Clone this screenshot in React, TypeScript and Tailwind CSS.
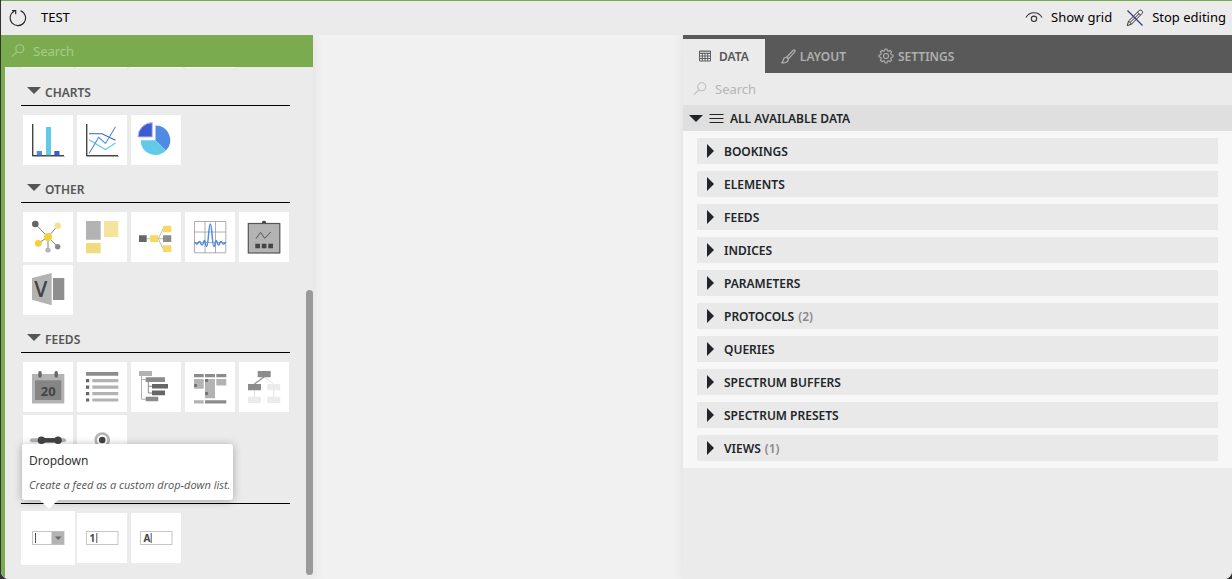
import React from 'react';

const SearchIcon = ({ className }: { className: string }) => (
  <svg viewBox="0 0 14 14" className={className} fill="none" stroke="currentColor" strokeWidth="1.1">
    <circle cx="8.8" cy="4.8" r="4" />
    <path d="M6 7.7 1 12.7" />
  </svg>
);

const DownTriangle = () => (
  <svg viewBox="0 0 14 7" className="h-[7px] w-3.5 shrink-0" fill="currentColor">
    <path d="M0 0h14L7 7z" />
  </svg>
);

const Axes = () => (
  <>
    <path d="M10.3 9v32.5H42" fill="none" stroke="#c4c4c4" strokeWidth="1" />
    <path d="M9.6 9v31.7H41" fill="none" stroke="#444" strokeWidth="1.2" />
  </>
);

const FieldBox = () => <rect x="9.5" y="18.5" width="31.5" height="13" fill="#fff" stroke="#c6c6c6" />;

const icons: Record<string, React.ReactNode> = {
  bar: (
    <>
      <Axes />
      <path d="M13.7 36H19v4.2h-5.3z" fill="#4f8be0" />
      <path d="M23 12h5v28.2h-5z" fill="#62c9e8" />
      <path d="M31.3 36h5.2v4.2h-5.2z" fill="#3f5bd0" />
    </>
  ),
  line: (
    <g fill="none" strokeWidth="1.1">
      <Axes />
      <path d="M12 18.7h13l13.5 6.6" stroke="#3f5bd0" />
      <path d="m12 24.7 16.5 9.8 10-6.5" stroke="#62c9e8" />
      <path d="m12 38.5 9.7-16.2 6.8 6.2 10-16.8" stroke="#4f8be0" />
    </g>
  ),
  pie: (
    <>
      <path d="M24.5 25.2V10.4a14.8 14.8 0 0 1 10.4 25.2z" fill="#4f8be0" />
      <path d="M24.5 25.2 34.9 35.6A14.8 14.8 0 0 1 9.7 25.2z" fill="#62c9e8" />
      <path d="M21.3 22V7.6A14.4 14.4 0 0 0 6.9 22z" fill="#3f5bd0" stroke="#b9c3ef" strokeWidth="1" />
    </>
  ),
  network: (
    <>
      <path d="M25 25 12.3 12M25 25l9.7-11.3M25 25l-9.7 6.3M25 25l9.7 9.7M25 25v13" stroke="#777" strokeWidth="0.9" />
      <circle cx="25" cy="25" r="4" fill="#f2d03b" />
      <circle cx="12.3" cy="12" r="3.3" fill="#666" />
      <circle cx="34.7" cy="13.7" r="3.2" fill="#f7e28c" />
      <circle cx="15.3" cy="31.3" r="3.4" fill="#f2d03b" />
      <circle cx="34.7" cy="34.7" r="2.7" fill="#888" />
      <circle cx="25" cy="38" r="2.6" fill="#b3b3b3" />
    </>
  ),
  treemap: (
    <>
      <path d="M9 9h14.7v18.7H9z" fill="#b3b3b3" />
      <path d="M27 9h14.3v16H27z" fill="#f6e49c" />
      <path d="M9 31h14.7v10.3H9z" fill="#f0db7d" />
    </>
  ),
  flow: (
    <>
      <path d="M15.7 26.7H32M27.3 26.7 32 17M27.3 26.7 32 36.7" stroke="#b3b3b3" strokeWidth="0.9" fill="none" />
      <path d="M8 23.3h7.7V30H8z" fill="#666" />
      <path d="M19 23.3h8.3V30H19zM32 13.7h8.3v6.6H32zM32 33.3h8.3V40H32z" fill="#f5d963" />
      <path d="M32 23.3h8.3V30H32z" fill="#8c8c8c" />
    </>
  ),
  spectrum: (
    <g fill="none">
      <path d="M9.5 9.5h31.3v31.3H9.5zM20 9.5v31.3M30.5 9.5v31.3M9.5 20h31.3M9.5 30.5h31.3" stroke="#999" strokeWidth="0.8" />
      <path d="M9.3 30.5c1.5 0 1.500 1.600 2.600 1.600s1.400-2.600 2.600-2.600 1.200 3.500 2.600 3.500 1.200-4.500 2.300-4.500 1 6 2.300 6c1.800 0 1.800-22.500 3.600-22.500s1.800 22.500 3.600 22.500c1.300 0 1.200-6 2.300-6s1 4.500 2.300 4.500 1.300-3.500 2.500-3.500 1.400 2.600 2.600 2.600 1.200-1.600 2.300-1.600" stroke="#4f8be0" strokeWidth="1.5" />
    </g>
  ),
  board: (
    <>
      <path d="M22.8 11a2.2 2.2 0 0 1 4.4 0z" fill="#444" />
      <rect x="9.3" y="11.5" width="31.5" height="29.5" fill="#b3b3b3" stroke="#555" strokeWidth="1.2" />
      <path d="m17 26.7 4.6-6.4 4.1 6 6-6.3" fill="none" stroke="#555" strokeWidth="1" />
      <path d="M16.3 31.7H21v4.6h-4.7zM22.8 31.7h4.6v4.6h-4.6zM29.3 31.7H34v4.6h-4.7z" fill="#444" />
    </>
  ),
  visio: (
    <>
      <path d="m9 13 19.7-5v32.3L9 34.7z" fill="#b3b3b3" />
      <path d="M30 13h11.3v22H30z" fill="#8f8f8f" />
      <text x="17.7" y="31.5" textAnchor="middle" fontSize="21" className="font-['Open_Sans'] font-semibold" fill="#444">V</text>
    </>
  ),
  calendar: (
    <>
      <path d="M9 12h32.3v29.5H9z" fill="#b3b3b3" />
      <path d="M12 18.3h26.3V38H12z" fill="#858585" />
      <path d="M17 10.7V14M33.2 10.7V14" stroke="#666" strokeWidth="3.4" strokeLinecap="round" />
      <text x="25.2" y="34" textAnchor="middle" fontSize="13" fontWeight="700" fill="#444">20</text>
    </>
  ),
  list: (
    <>
      <path d="M9 10h32.3v3.7H9z" fill="#8c8c8c" />
      <path d="M9 17h3.2v3.2H9zM9 23.6h3.2v3.2H9zM9 30h3.2v3.2H9zM9 36.4h3.2v3.2H9z" fill="#666" />
      <path d="M15.3 17h26v3.2h-26zM15.3 23.6h26v3.2h-26zM15.3 30h26v3.2h-26zM15.3 36.4h26v3.2h-26z" fill="#b3b3b3" />
    </>
  ),
  tree: (
    <>
      <path d="M10.5 14v23.3H15M10.5 17.5H15" fill="none" stroke="#b3b3b3" strokeWidth="1" />
      <path d="M17.3 20v11H21M17.3 24.3H21" fill="none" stroke="#8c8c8c" strokeWidth="1" />
      <path d="M8 9h13v5H8z" fill="#b3b3b3" />
      <path d="M14.7 15.3H34V20H14.7zM14.7 34.7h12.6v4.6H14.7z" fill="#8c8c8c" />
      <path d="M21 22h16v4.6H21zM21 28.6h13v4.6H21z" fill="#666" />
    </>
  ),
  timeline: (
    <>
      <path d="M9 12h9.7v3.2H9zM20 12h10v3.2H20zM31.3 12h10v3.2h-10zM20 38.2h21.3v3.2H20z" fill="#8c8c8c" />
      <path d="M9 17h9.7v9.7H9zM20 17h10v19.3H20zM31.3 17h10v6.6h-10zM9 38.2h9.7v3.2H9z" fill="#b3b3b3" />
      <path d="M9 22h3v3H9zM20 17h3v3h-3zM20 30h3v3h-3z" fill="#777" />
    </>
  ),
  org: (
    <>
      <path d="m25 15 9.7 7M34.7 28v7M15.5 28v7" stroke="#e2e2e2" strokeWidth="1" />
      <path d="m25 15-9.7 7" stroke="#8c8c8c" strokeWidth="1.2" />
      <path d="M18.7 9h13v6.3h-13zM9 22h13v6.3H9z" fill="#8c8c8c" />
      <path d="M28.3 22h12.9v6.3H28.3zM9 34.7h13V41H9zM28.3 34.7h12.9V41H28.3z" fill="#ebebeb" />
    </>
  ),
  range: (
    <>
      <path d="M9 25.3h32" stroke="#b3b3b3" strokeWidth="4" strokeLinecap="round" />
      <path d="M17 25.3h20" stroke="#444" strokeWidth="4.5" />
      <circle cx="18.5" cy="25.3" r="3.8" fill="#444" />
      <circle cx="35" cy="25.3" r="3.8" fill="#444" />
    </>
  ),
  radio: (
    <>
      <circle cx="25.2" cy="25" r="6.5" fill="#fff" stroke="#b3b3b3" strokeWidth="2.6" />
      <circle cx="25.2" cy="25" r="3.3" fill="#444" />
    </>
  ),
  dropdown: (
    <>
      <FieldBox />
      <path d="M28.5 18.5H41v13H28.5z" fill="#b3b3b3" />
      <path d="M12.5 20v10" stroke="#555" strokeWidth="1" />
      <path d="M32 23.5h6.5L35.2 27z" fill="#666" />
    </>
  ),
  numeric: (
    <>
      <FieldBox />
      <text x="12.5" y="29" fontSize="10" fontWeight="700" fill="#444">1</text>
      <path d="M19.8 20v10" stroke="#555" strokeWidth="1" />
    </>
  ),
  text: (
    <>
      <FieldBox />
      <text x="12.5" y="29" fontSize="10" fontWeight="700" fill="#444">A</text>
      <path d="M20.2 20v10" stroke="#555" strokeWidth="1" />
    </>
  ),
};

const sections = [
  { title: 'CHARTS', tiles: ['bar', 'line', 'pie'] },
  { title: 'OTHER', tiles: ['network', 'treemap', 'flow', 'spectrum', 'board', 'visio'] },
  { title: 'FEEDS', tiles: ['calendar', 'list', 'tree', 'timeline', 'org', 'range', 'radio'] },
];

const dataItems = [
  { name: 'BOOKINGS' },
  { name: 'ELEMENTS' },
  { name: 'FEEDS' },
  { name: 'INDICES' },
  { name: 'PARAMETERS' },
  { name: 'PROTOCOLS', count: 2 },
  { name: 'QUERIES' },
  { name: 'SPECTRUM BUFFERS' },
  { name: 'SPECTRUM PRESETS' },
  { name: 'VIEWS', count: 1 },
];

const Tile = ({ icon }: { icon: string }) => (
  <button aria-label={icon} className="flex size-[50px] items-center justify-center bg-white">
    <svg viewBox="0 0 50 50" className="size-[50px]">{icons[icon]}</svg>
  </button>
);

const App: React.FC = () => {
  return (
    <div className="h-screen bg-[#333] pl-px font-['Noto_Sans',sans-serif] text-[#212529]">
      <div className="flex h-full flex-col overflow-hidden rounded-b-lg border-t border-[#77aa4f] bg-[#f1f1f1]">
        {/* Top bar */}
        <header className="relative z-10 flex h-[34px] shrink-0 items-center justify-between bg-[#ebebeb] pr-1.5 pl-2 text-[13px] text-black">
          <div className="flex items-center gap-3.5">
            <button aria-label="Reload">
              <svg viewBox="0 0 18 18" className="size-[18px]" fill="none" stroke="#222" strokeWidth="1.1">
                <path d="M11.5 1.700A7.700 7.700 0 1 1 5.500 2" />
                <path d="M3 1.500h3.700v3.700" />
              </svg>
            </button>
            <h1>TEST</h1>
          </div>
          <div className="flex items-center gap-3.5">
            <button className="flex items-center gap-2">
              <svg viewBox="0 0 18 18" className="size-[18px]" fill="none" stroke="#333" strokeWidth="1.1">
                <path d="M1 8.600C2.500 5.500 5.500 3.700 9 3.700s6.500 1.800 8 4.900" />
                <circle cx="9" cy="9.800" r="2.700" />
              </svg>
              Show grid
            </button>
            <button className="flex items-center gap-2">
              <svg viewBox="0 0 18 18" className="size-[18px]" fill="none" stroke="#333" strokeWidth="1">
                <path d="m1.500 1.500 15 15" stroke="#2f3f8f" strokeWidth="1.2" />
                <path d="M1.300 16.700 2.500 12 13 1.700c1-.9 2.100-.7 2.900 0s.9 2 0 2.900L5.500 15.200zM2.500 12l3 3.200M11.500 3.200l3 3M4 13.500 13 4.700" />
              </svg>
              Stop editing
            </button>
          </div>
        </header>

        <main className="flex min-h-0 flex-1">
          {/* Component library */}
          <aside className="relative flex w-[312px] shrink-0 flex-col border-l-4 border-[#7aab4f] bg-[#ebebeb] shadow-[0_0_12px_rgba(0,0,0,0.08)]">
            <label className="flex h-8 shrink-0 items-center gap-2 bg-[#7aab4f] pl-1.5 text-[#a9cb8b]">
              <SearchIcon className="size-3.5" />
              <input aria-label="Search components" placeholder="Search" className="min-w-0 flex-1 bg-transparent pt-0.5 text-[13px] outline-none placeholder:text-[#a9cb8b]" />
            </label>
            <div className="min-h-0 flex-1 overflow-hidden pr-[23px] pl-4">
              <div className="flex gap-1 pl-0.5">
                <div className="h-px w-[50px] bg-white" />
                <div className="h-px w-[50px] bg-white" />
                <div className="h-px w-[50px] bg-white" />
                <div className="h-px w-[50px] bg-white" />
              </div>
              {sections.map((section) => (
                <section key={section.title}>
                  <button className="flex h-[38px] w-full items-end gap-1 border-b border-black pb-[3px] pl-1.5 text-xs font-semibold text-[#555]">
                    <span className="pb-2"><DownTriangle /></span>
                    <span className="leading-[18px]">{section.title}</span>
                  </button>
                  <div className="flex flex-wrap gap-x-1 gap-y-[3px] pt-[9px] pl-0.5">
                    {section.tiles.map((tile) => <Tile key={tile} icon={tile} />)}
                  </div>
                </section>
              ))}
              <section>
                <div className="h-[39px] border-b border-black" />
                <div className="flex gap-1 pt-[9px] pl-0.5">
                  <div className="relative">
                    <div className="-m-0.5 bg-white p-0.5"><Tile icon="dropdown" /></div>
                    {/* Tooltip */}
                    <div role="tooltip" className="absolute bottom-[63px] -left-px z-10 w-[211px] rounded-[3px] bg-white px-[7px] pt-2 pb-2 shadow-[0_1px_8px_rgba(0,0,0,0.3)]">
                      <p className="text-xs leading-[18px] text-[#333]">Dropdown</p>
                      <p className="mt-2 font-['Open_Sans',sans-serif] text-[11px] leading-3.5 whitespace-nowrap text-[#555] italic">Create a feed as a custom drop-down list.</p>
                      <svg viewBox="0 0 18 9" className="absolute top-full left-[18px] h-[9px] w-[18px]">
                        <path d="M0 0h18L9 9z" fill="#fff" />
                      </svg>
                    </div>
                  </div>
                  <Tile icon="numeric" />
                  <Tile icon="text" />
                </div>
              </section>
            </div>
            <div className="absolute right-0 bottom-1 h-[285px] w-[7px] rounded-full bg-[#999]" />
          </aside>

          {/* Canvas */}
          <div className="min-w-0 flex-1" />

          {/* Data panel */}
          <aside className="w-[549px] shrink-0 bg-[#ebebeb] shadow-[0_0_12px_rgba(0,0,0,0.08)]">
            <nav className="flex h-[38px] bg-[#595959] pt-1 text-xs font-semibold text-[#b0b0b0]">
              <button className="flex items-center gap-2 bg-[#ebebeb] px-4 text-[#555]">
                <svg viewBox="0 0 12 12" className="size-3" fill="none" stroke="currentColor" strokeWidth="0.9">
                  <path d="M.5 1h11v10H.5zM.5 3.500h11M.5 6h11M.5 8.500h11M3.300 3.500V11M6 3.500V11M8.700 3.500V11" />
                  <path d="M.5 1h11v1.500H.5z" fill="currentColor" fillOpacity="0.5" stroke="none" />
                </svg>
                <span className="pt-0.5">DATA</span>
              </button>
              <button className="flex items-center gap-1 px-4">
                <svg viewBox="0 0 15 15" className="size-[15px]" fill="none" stroke="currentColor" strokeWidth="1.2">
                  <path d="M5.800 8 12.300 1.300c1-.9 2.400.3 1.500 1.500L7.600 9.700zM5.500 8.300c-1.500-.2-2.800.7-3.100 2.300-.2 1.200-.7 2.200-1.700 3 2.400.7 6.300.3 6.700-3.500z" />
                </svg>
                <span className="pt-0.5">LAYOUT</span>
              </button>
              <button className="flex items-center gap-1 px-4">
                <svg viewBox="0 0 16 16" className="size-4" fill="none" stroke="currentColor" strokeWidth="1.1" strokeLinejoin="round">
                  <path d="M6.700 2.700 7 1h2l.3 1.700 1.500.6 1.400-1 1.500 1.500-1 1.400.6 1.500L15 7v2l-1.700.3-.6 1.500 1 1.400-1.500 1.500-1.400-1-1.500.6L9 15H7l-.3-1.700-1.500-.6-1.400 1-1.500-1.500 1-1.400-.6-1.500L1 9V7l1.700-.3.6-1.500-1-1.400 1.500-1.500 1.400 1z" />
                  <circle cx="8" cy="8" r="2.500" />
                </svg>
                <span className="pt-0.5">SETTINGS</span>
              </button>
            </nav>
            <label className="flex h-8 items-center gap-2 pl-2.5 text-[#bbb]">
              <SearchIcon className="size-3.5" />
              <input aria-label="Search data" placeholder="Search" className="min-w-0 flex-1 bg-transparent pt-0.5 text-[13px] outline-none placeholder:text-[#b5b5b5]" />
            </label>
            <button className="flex h-[26px] w-full items-center gap-1.5 bg-[#dfdfdf] pl-1.5 text-xs font-semibold">
              <DownTriangle />
              <svg viewBox="0 0 15 11" className="h-[11px] w-[15px]" stroke="#222" strokeWidth="1">
                <path d="M.5 1.500h14M.5 5.500h14M.5 9.500h14" />
              </svg>
              <span className="pt-0.5">ALL AVAILABLE DATA</span>
            </button>
            <ul className="flex flex-col gap-[7px] bg-[#f7f7f7] px-3.5 py-[7px]">
              {dataItems.map((item) => (
                <li key={item.name}>
                  <button className="flex h-[26px] w-full items-center bg-[#e9e9e9] pl-2.5 text-xs font-semibold">
                    <svg viewBox="0 0 7 14" className="mr-2.5 h-3.5 w-[7px]" fill="currentColor">
                      <path d="M0 0v14l7-7z" />
                    </svg>
                    <span className="pt-0.5">{item.name}</span>
                    {item.count && <span className="ml-1 pt-0.5 text-[#888]">({item.count})</span>}
                  </button>
                </li>
              ))}
            </ul>
          </aside>
        </main>
      </div>
    </div>
  );
};

export default App;
